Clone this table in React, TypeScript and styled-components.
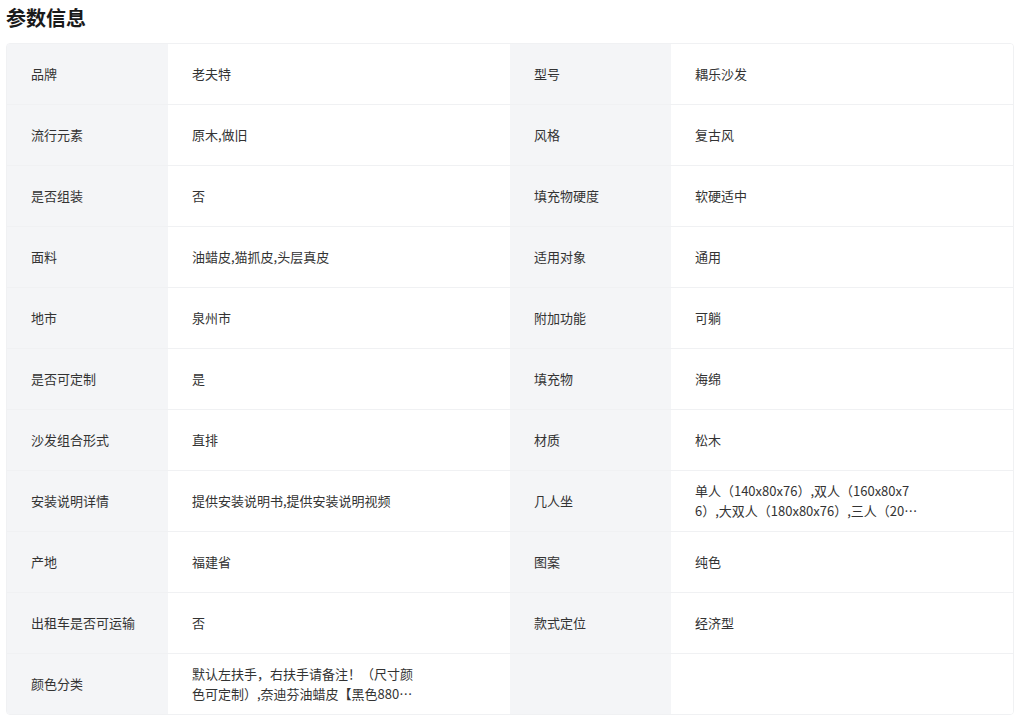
import React from "react";
import styled, { createGlobalStyle } from "styled-components";

const Global = createGlobalStyle`
  html, body { margin: 0; padding: 0; background: #fff; }
  body { font-family: "Noto Sans CJK SC", "Noto Sans", sans-serif; color: #333; }
`;

const Page = styled.div`
  padding: 6px 6px 0;
`;

const Title = styled.h2`
  margin: 0 0 13px;
  font-size: 20px;
  line-height: 24px;
  font-weight: 700;
  color: #1a1a1a;
`;

const Table = styled.div`
  display: grid;
  grid-template-columns: 16% 34% 16% 34%;
  border: 1px solid #f0f1f3;
  border-radius: 4px;
  overflow: hidden;
`;

const Cell = styled.div<{ $label?: boolean; $last?: boolean }>`
  box-sizing: border-box;
  display: flex;
  align-items: center;
  padding-left: 24px;
  font-size: 13px;
  line-height: 20px;
  color: #333;
  background: ${(p) => (p.$label ? "#f4f5f7" : "#fff")};
  border-bottom: ${(p) => (p.$last ? "none" : "1px solid #f0f1f3")};
  height: ${(p) => (p.$last ? "60px" : "61px")};
`;

const Value = styled.span`
  width: 70%;
  display: -webkit-box;
  -webkit-line-clamp: 2;
  -webkit-box-orient: vertical;
  overflow: hidden;
  word-break: break-all;
`;

const rows: [string, string, string, string][] = [
  ["品牌", "老夫特", "型号", "耦乐沙发"],
  ["流行元素", "原木,做旧", "风格", "复古风"],
  ["是否组装", "否", "填充物硬度", "软硬适中"],
  ["面料", "油蜡皮,猫抓皮,头层真皮", "适用对象", "通用"],
  ["地市", "泉州市", "附加功能", "可躺"],
  ["是否可定制", "是", "填充物", "海绵"],
  ["沙发组合形式", "直排", "材质", "松木"],
  ["安装说明详情", "提供安装说明书,提供安装说明视频", "几人坐", "单人（140x80x76）,双人（160x80x76）,大双人（180x80x76）,三人（200x80x76）"],
  ["产地", "福建省", "图案", "纯色"],
  ["出租车是否可运输", "否", "款式定位", "经济型"],
  ["颜色分类", "默认左扶手，右扶手请备注！（尺寸颜色可定制）,奈迪芬油蜡皮【黑色8802】,奈迪芬油蜡皮【棕色8803】", "", ""],
];

export default function App() {
  return (
    <Page>
      <Global />
      <Title>参数信息</Title>
      <Table>
        {rows.map((r, i) => {
          const last = i === rows.length - 1;
          return (
            <React.Fragment key={i}>
              <Cell $label $last={last}>{r[0]}</Cell>
              <Cell $last={last}><Value>{r[1]}</Value></Cell>
              <Cell $label $last={last}>{r[2]}</Cell>
              <Cell $last={last}><Value>{r[3]}</Value></Cell>
            </React.Fragment>
          );
        })}
      </Table>
    </Page>
  );
}
